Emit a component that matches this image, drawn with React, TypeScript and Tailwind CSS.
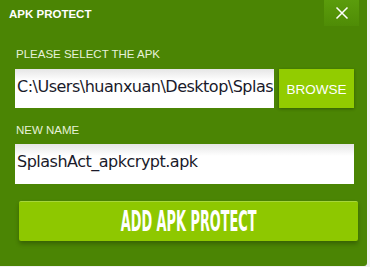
import React from 'react';

export default function App() {
  return (
    <div className="w-[370px] h-[267px] bg-[#f2f2f2] overflow-hidden">
      <div className="w-[367px] h-[266px] bg-[#4b8504] rounded-br-[3px] flex flex-col font-['Liberation_Sans',Arial,sans-serif]">
        {/* title bar */}
        <div className="h-[26px] flex items-start">
          <div className="pl-[9px] pt-[7px] text-white font-bold text-[11.5px] leading-[14px] flex-1">APK PROTECT</div>
          <button className="w-[35px] h-[26px] mr-[8px] bg-gradient-to-b from-[#5b9c0c] to-[#4f8c06] flex items-center justify-center">
            <svg width="14" height="14" viewBox="0 0 14 14">
              <path d="M1.5 1.5 L12.5 12.5 M12.5 1.5 L1.5 12.5" stroke="white" strokeWidth="1.5" />
            </svg>
          </button>
        </div>

        <div className="pl-[15px] pr-[13px] flex flex-col">
          <div className="mt-[22px] pl-[1px] text-[#e6f2d8] text-[11.5px] leading-[12px]">PLEASE SELECT THE APK</div>
          <div className="mt-[9px] flex gap-[5px]">
            <div className="w-[259px] h-[39px] bg-gradient-to-b from-[#e6e6e6] via-white via-30% to-white overflow-hidden whitespace-nowrap pl-[2px] pt-[9px] text-[16px] leading-[18px] text-[#1a1a2a] font-['DejaVu_Sans',sans-serif] tracking-[-0.5px]">
              C:\Users\huanxuan\Desktop\Splas
            </div>
            <button className="w-[75px] h-[39px] bg-[#92cc00] text-white text-[13.5px] pt-[4px] shadow-[0_1px_3px_rgba(0,0,0,0.3)]">BROWSE</button>
          </div>

          <div className="mt-[16px] pl-[1px] text-[#e6f2d8] text-[11.5px] leading-[12px]">NEW NAME</div>
          <div className="mt-[8px] w-[339px] h-[40px] bg-gradient-to-b from-[#e6e6e6] via-white via-30% to-white pl-[2px] pt-[9px] text-[16px] leading-[18px] text-[#1a1a2a] font-['DejaVu_Sans',sans-serif] tracking-[-0.5px]">
            SplashAct_apkcrypt.apk
          </div>
        </div>

        <div className="pl-[19px] mt-[17px]">
          <button className="w-[339px] h-[40px] bg-[#8ec800] border-t border-[#a6d63a] rounded-[2px] shadow-[0_3px_4px_rgba(0,0,0,0.25)] flex items-center justify-center">
            <span className="inline-block text-white font-bold text-[28px] leading-[28px] scale-x-[0.46] whitespace-nowrap font-['DejaVu_Sans',sans-serif]">ADD APK PROTECT</span>
          </button>
        </div>
      </div>
    </div>
  );
}
